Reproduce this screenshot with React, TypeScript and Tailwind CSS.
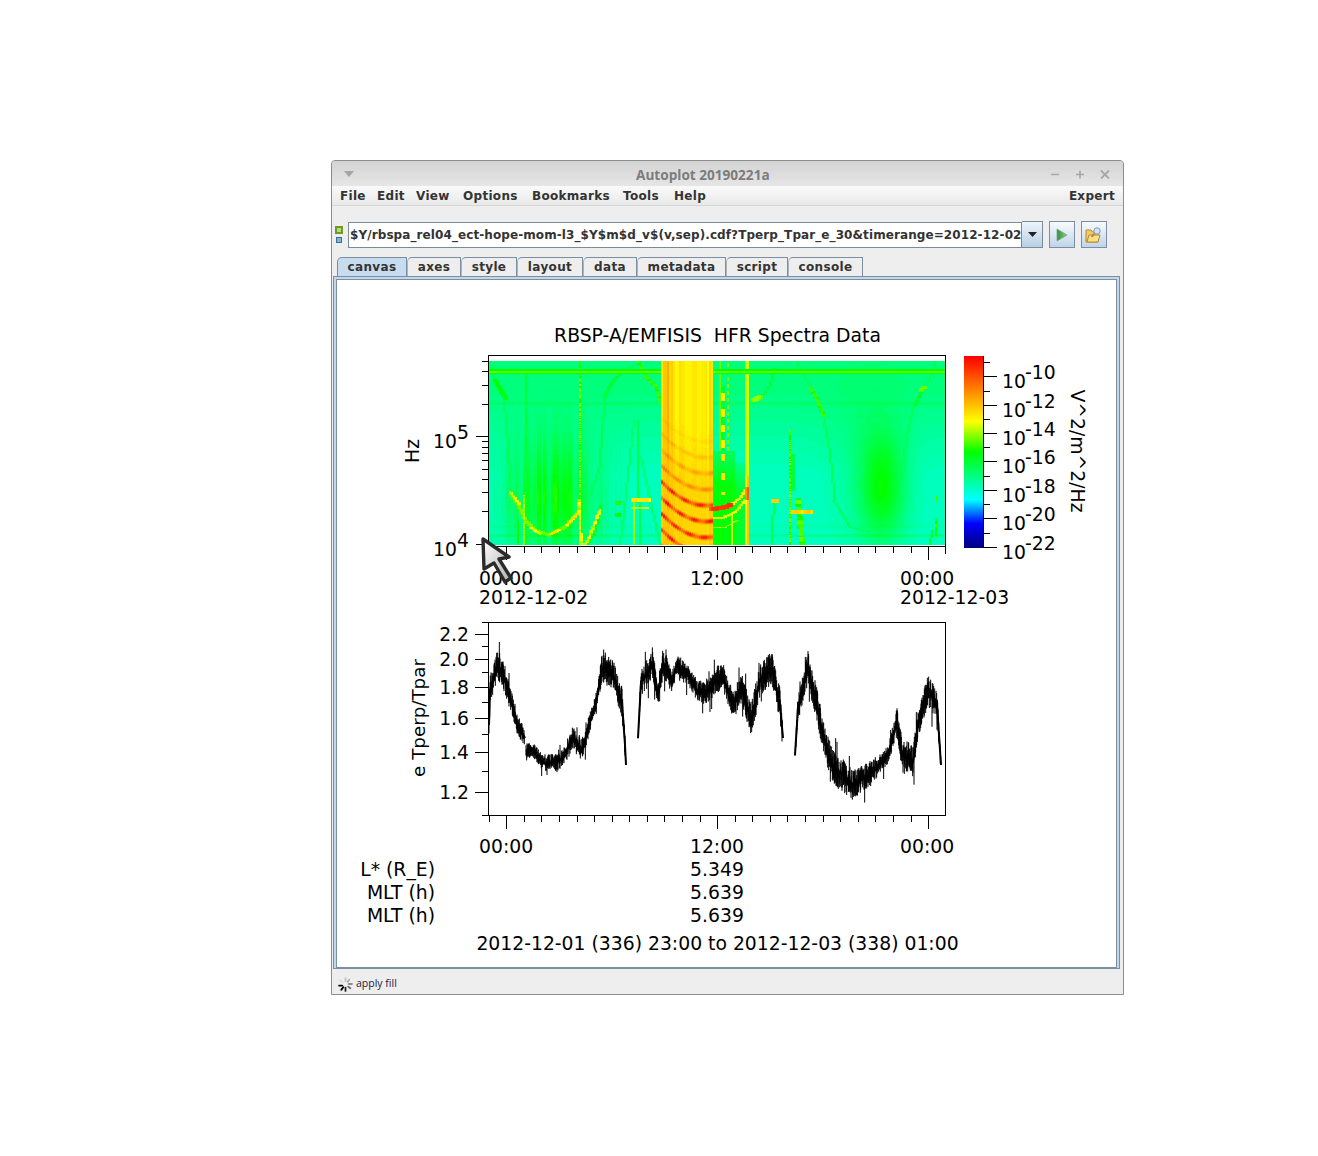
import React from "react";

const PW = 456;
const PH = 184;
const PX = 489;
const PY = 361;

function rng(seed: number) {
  let s = seed;
  return () => {
    s = (s * 1664525 + 1013904223) % 4294967296;
    return s / 4294967296;
  };
}

// rainbow colour table, same stops as the colour bar
function colormap(t: number) {
  const stops: [number, number, number, number][] = [
    [0, 0, 0, 128],
    [0.125, 0, 0, 255],
    [0.25, 0, 255, 255],
    [0.5, 0, 255, 0],
    [0.66, 255, 255, 0],
    [0.83, 255, 128, 0],
    [1, 255, 0, 0],
  ];
  const v = Math.max(0, Math.min(1, t));
  for (let i = 1; i < stops.length; i++) {
    if (v <= stops[i][0]) {
      const a = stops[i - 1];
      const b = stops[i];
      const f = (v - a[0]) / (b[0] - a[0]);
      return `rgb(${Math.round(a[1] + (b[1] - a[1]) * f)},${Math.round(a[2] + (b[2] - a[2]) * f)},${Math.round(a[3] + (b[3] - a[3]) * f)})`;
    }
  }
  return "rgb(255,0,0)";
}

function buildSpectrogram() {
  const r = rng(42);
  const cw = 2;
  const cols = Math.ceil(PW / cw);
  const field = new Float32Array(cols * PH);
  const colNoise = Array.from({ length: cols }, () => r());
  const get = (c: number, y: number) => field[c * PH + y];
  const put = (c: number, y: number, v: number) => {
    if (c >= 0 && c < cols && y >= 0 && y < PH) field[c * PH + y] = v;
  };
  const raise = (x: number, y: number, v: number) => {
    const c = Math.floor((x - PX) / cw);
    const yy = Math.floor(y - PY);
    if (c >= 0 && c < cols && yy >= 0 && yy < PH && get(c, yy) < v) put(c, yy, v);
  };

  const gauss = (x: number, y: number, cx: number, cy: number, sx: number, sy: number) =>
    Math.exp(-((x - cx) * (x - cx)) / (2 * sx * sx) - ((y - cy) * (y - cy)) / (2 * sy * sy));

  // background with the two broad green troughs
  for (let c = 0; c < cols; c++) {
    const x = PX + c * cw;
    for (let yy = 0; yy < PH; yy++) {
      const y = PY + yy;
      const s = Math.max(0, Math.min(1, (475 - y) / 85));
      let v = 0.312 + 0.065 * s;
      v += 0.165 * gauss(x, y, 552, 498, 32, 42) * (0.6 + 0.8 * colNoise[c]);
      v += 0.16 * gauss(x, y, 881, 487, 16, 36);
      v += 0.035 * gauss(x, y, 868, 470, 28, 60);
      if (y > 524 && y < 528) v += 0.014;
      if (y > 533 && y < 537) v += 0.04;
      if (y > 401 && y < 405) v += 0.028;
      if (y > 415 && y < 417) v += 0.012;
      put(c, yy, v);
    }
  }

  const stroke = (pts: number[][], hw: number, val: number, jitter = 0.03) => {
    const h = hw / 2;
    for (let i = 1; i < pts.length; i++) {
      const [x0, y0] = pts[i - 1];
      const [x1, y1] = pts[i];
      const n = Math.ceil(Math.hypot(x1 - x0, y1 - y0));
      for (let k = 0; k <= n; k++) {
        const x = x0 + ((x1 - x0) * k) / n;
        const y = y0 + ((y1 - y0) * k) / n;
        const vv = val + (r() - 0.5) * jitter;
        for (let dx = -h; dx <= h; dx++) for (let dy = -h; dy <= h; dy++) raise(x + dx, y + dy, vv);
      }
    }
  };

  // plasmapause style curves
  stroke([[490, 361], [495, 385], [504, 398], [508, 450], [511, 490]], 0, 0.42);
  stroke([[495, 380], [505, 398]], 2, 0.48);
  stroke([[510, 493], [518, 505], [525, 520], [535, 530], [548, 535], [565, 527], [578, 512]], 2, 0.55, 0.06);
  stroke([[530, 527], [540, 534]], 1, 0.62, 0.1);
  stroke([[550, 534], [560, 530]], 1, 0.66, 0.12);
  stroke([[567, 525], [578, 513]], 1, 0.66, 0.14);
  stroke([[510, 492], [520, 505]], 1, 0.62, 0.16);
  stroke([[526, 370], [526, 545]], 0, 0.44);
  stroke([[578, 512], [590, 495], [600, 465], [604, 400], [612, 382], [622, 372], [640, 361]], 0, 0.42);
  stroke([[604, 397], [612, 382], [622, 372]], 1, 0.45);
  stroke([[638, 361], [645, 377], [655, 385], [660, 402]], 1, 0.5, 0.1);
  stroke([[580, 361], [580, 545]], 0, 0.54, 0.14);
  stroke([[579, 500], [581, 545]], 1, 0.62, 0.14);
  stroke([[585, 545], [590, 535], [600, 510]], 1, 0.62, 0.1);
  stroke([[588, 545], [596, 530], [601, 505]], 0, 0.5);
  stroke([[523, 495], [523, 545]], 0, 0.6, 0.1);
  stroke([[518, 520], [519, 545]], 0, 0.5);
  stroke([[634, 420], [620, 545]], 0, 0.4);
  stroke([[637, 420], [640, 545]], 0, 0.43);
  stroke([[640, 455], [660, 545]], 0, 0.4);
  stroke([[633, 500], [648, 500]], 3, 0.68, 0.04);
  stroke([[633, 508], [648, 508]], 1, 0.62);
  stroke([[618, 503], [619, 503]], 3, 0.52);
  stroke([[618, 515], [619, 515]], 3, 0.5);
  stroke([[634, 500], [634, 545]], 0, 0.6);
  stroke([[752, 402], [756, 398], [764, 394], [770, 384], [775, 368]], 0, 0.45);
  stroke([[753, 400], [760, 397]], 3, 0.58, 0.06);
  stroke([[797, 362], [810, 387], [823, 417], [830, 453], [835, 503], [850, 527], [867, 532], [890, 522], [900, 487], [907, 433], [913, 407], [923, 388], [932, 375], [935, 361]], 0, 0.42);
  stroke([[810, 387], [818, 402], [824, 417]], 1, 0.52, 0.06);
  stroke([[915, 405], [923, 388]], 1, 0.46);
  stroke([[921, 390], [924, 387]], 2, 0.56);
  stroke([[855, 361], [863, 447]], 0, 0.385);
  stroke([[773, 501], [777, 501]], 3, 0.72);
  stroke([[794, 512], [811, 512]], 3, 0.7, 0.06);
  stroke([[790, 430], [790, 545]], 0, 0.54, 0.12);
  stroke([[793, 455], [793, 490]], 1, 0.43);
  stroke([[798, 500], [802, 545]], 3, 0.5, 0.14);
  stroke([[774, 500], [771, 545]], 0, 0.42);
  stroke([[936, 497], [936, 500]], 1, 0.55);
  stroke([[936, 520], [936, 537]], 1, 0.5, 0.12);
  stroke([[932, 530], [930, 545]], 0, 0.46);

  // the bright burst with its ripples
  for (let c = 0; c < cols; c++) {
    const x = PX + c * cw;
    if (x < 661 || x >= 749) continue;
    const stripe = colNoise[c];
    for (let yy = 0; yy < PH; yy++) {
      const y = PY + yy;
      const u = y + 0.012 * (x - 705) * (x - 705);
      const amp = Math.max(0, Math.min(1, (u - 430) / 60));
      const ripple = Math.sin((2 * Math.PI * (u - 505)) / 16 + Math.PI / 2);
      const peak = Math.pow(Math.max(0, ripple), 2);
      const lumps = 0.75 + 0.25 * Math.sin(x / 2.6 + y / 7);
      if (x < 712) {
        const lean = Math.max(0, Math.abs(x - 690) - 8) / 20;
        const fade = 1 - 0.6 * amp;
        const top = 0.665 + (0.03 + 0.1 * lean) * stripe * fade;
        const strong = u > 494 ? 0.26 : 0.11;
        put(c, yy, top + amp * (0.045 + strong * peak * lumps));
      } else if (x < 735) {
        const band = x > 717 && x < 720;
        const dots = x > 719 && x < 724;
        const thin = x > 726 && x < 729;
        if (y > 450) {
          let vv = 0.385 + 0.095 * Math.min(1, (y - 450) / 35) + stripe * 0.03;
          if (stripe > 0.72 && y > 512) vv = 0.63;
          if (dots && y < 495 && Math.sin(y / 3) > 0.3) vv = 0.7;
          put(c, yy, vv);
        } else if (band) {
          put(c, yy, 0.57);
        } else if (dots && y > 385) {
          put(c, yy, Math.sin(y / 2.5) > 0 ? 0.68 : 0.44);
        } else if (thin) {
          put(c, yy, Math.sin(y * 0.9) > -0.2 ? 0.58 : 0.4);
        }
      } else {
        if (y > 462 && x < 745) {
          put(c, yy, 0.345 + 0.1 * Math.min(1, (y - 462) / 30) + stripe * 0.02);
        }
        if (x >= 745 && x < 749) {
          const low = y > 475 ? (stripe > 0.5 ? 0.74 : 0.67) : 0.63;
          put(c, yy, low + (y > 486 && y < 500 ? 0.14 : 0));
        }
      }
    }
  }
  // the arcs that carry on to the right of the burst
  stroke([[712, 509], [722, 508], [731, 505]], 3, 0.9, 0.08);
  stroke([[731, 505], [740, 498], [746, 488]], 1, 0.66, 0.1);
  stroke([[712, 518], [722, 518], [735, 512], [745, 500]], 1, 0.62, 0.1);
  stroke([[712, 528], [725, 527], [738, 520]], 0, 0.58, 0.1);

  // strong emission line near the top
  for (let c = 0; c < cols; c++) {
    const x = PX + c * cw;
    const burst = x >= 661 && x < 712;
    for (let y = 369; y < 374; y++) {
      if (!burst) put(c, y - PY, y === 371 || y === 372 ? 0.56 : 0.51);
    }
  }

  const levels = 96;
  const paths: string[] = Array.from({ length: levels }, () => "");
  const q = (v: number) => Math.max(0, Math.min(levels - 1, Math.round(v * (levels - 1))));
  for (let c = 0; c < cols; c++) {
    const x = PX + c * cw;
    let start = 0;
    let cur = q(get(c, 0));
    for (let yy = 1; yy <= PH; yy++) {
      const lv = yy < PH ? q(get(c, yy)) : -1;
      if (lv !== cur) {
        paths[cur] += `M${x} ${PY + start}h${cw}v${yy - start}h-${cw}z`;
        start = yy;
        cur = lv;
      }
    }
  }
  return paths
    .map((d, i) => ({ d, fill: colormap(i / (levels - 1)) }))
    .filter((p) => p.d.length > 0);
}

// envelope of the Tperp/Tpar trace: x, y, half-width; segments are split at the data gaps
const traceSegments: number[][][] = [
  [[489, 725, 16], [490, 690, 20], [497, 665, 18], [503, 672, 18], [510, 698, 14], [518, 725, 13], [525, 738, 10]],
  [[526, 751, 9], [533, 750, 9], [543, 763, 9], [557, 762, 11], [563, 758, 11], [573, 738, 14], [582, 750, 14], [590, 722, 12], [597, 698, 10], [602, 668, 17], [613, 675, 19], [622, 702, 19], [625, 745, 14], [626, 765, 6]],
  [[638, 738, 2], [641, 682, 16], [653, 665, 18], [658, 695, 15], [663, 662, 17], [672, 682, 13], [677, 665, 11], [690, 678, 13], [698, 692, 13], [705, 693, 15], [722, 675, 17], [733, 705, 17], [742, 688, 18], [751, 722, 20], [760, 680, 20], [772, 668, 20], [780, 705, 20], [783, 738, 11]],
  [[795, 755, 4], [798, 708, 16], [808, 668, 20], [817, 705, 20], [823, 735, 20], [832, 765, 21], [853, 785, 18], [873, 772, 15], [888, 755, 10], [897, 722, 17], [902, 755, 21], [913, 762, 19], [918, 725, 16], [928, 690, 18], [937, 705, 18], [941, 765, 9]],
];

function buildTrace() {
  const r = rng(7);
  let d = "";
  let mid = "";
  for (const seg of traceSegments) {
    mid += `M${seg[0][0]} ${seg[0][1]}`;
    for (let i = 1; i < seg.length; i++) {
      const [x0, y0, a0] = seg[i - 1];
      const [x1, y1, a1] = seg[i];
      mid += `L${x1} ${y1}`;
      const n = Math.max(1, Math.round((x1 - x0) * 3));
      for (let k = 0; k < n; k++) {
        const f = k / n;
        const x = x0 + (x1 - x0) * f;
        const y = y0 + (y1 - y0) * f;
        const a = a0 + (a1 - a0) * f;
        const up = a * r() * (r() < 0.05 ? 1.5 : 0.85);
        const dn = a * r() * (r() < 0.06 ? 1.7 : 0.85);
        d += `M${x.toFixed(2)} ${(y - up).toFixed(1)}V${(y + dn).toFixed(1)}`;
      }
    }
  }
  return { d, mid };
}

const spectro = buildSpectrogram();
const trace = buildTrace();

const hourTicks = Array.from({ length: 26 }, (_, i) => 489.1 + i * 17.58);
const decadeLogs = [1, 2, 3, 4, 5, 6, 7, 8, 9];
const freqTicks = [
  ...decadeLogs.map((m) => 544.2 - Math.log10(m) * 107.5),
  ...[1, 2, 3, 4, 5].map((m) => 436.7 - Math.log10(m) * 107.5),
];
const ratioMajor = [
  { y: 634, t: "2.2" },
  { y: 659, t: "2.0" },
  { y: 687, t: "1.8" },
  { y: 718, t: "1.6" },
  { y: 752, t: "1.4" },
  { y: 792, t: "1.2" },
];
const ratioMinor = [622, 646, 672, 702, 734, 771, 815];
const barMajor = [
  { y: 376.7, e: "-10" },
  { y: 405, e: "-12" },
  { y: 433, e: "-14" },
  { y: 461.5, e: "-16" },
  { y: 490, e: "-18" },
  { y: 518.5, e: "-20" },
  { y: 547, e: "-22" },
];
const barMinor = [362.5, 391, 419, 447, 476, 504, 533];
const barRows = Array.from({ length: 192 }, (_, i) => i);

function PowerLabel({ x, y, exp, ex }: { x: number; y: number; exp: string; ex: number }) {
  return (
    <>
      <text x={x} y={y}>10</text>
      <text x={ex} y={y - 9}>{exp}</text>
    </>
  );
}

function Canvas() {
  return (
    <svg width={779} height={687} viewBox="337 280 779 687" className="block font-['DejaVu_Sans',sans-serif] text-[18.8px]" fill="#000">
      <text x={717.5} y={342} textAnchor="middle" className="whitespace-pre">RBSP-A/EMFISIS  HFR Spectra Data</text>

      {/* spectrogram */}
      <g shapeRendering="crispEdges">
        {spectro.map((p) => (
          <path key={p.fill} d={p.d} fill={p.fill} />
        ))}
      </g>
      <g stroke="#000" strokeWidth={1} shapeRendering="crispEdges" fill="none">
        <rect x={488.5} y={355.5} width={457} height={191} />
        {hourTicks.map((x) => (
          <line key={x} x1={x} x2={x} y1={547} y2={553} />
        ))}
        {[506.7, 717.6, 928.5].map((x) => (
          <line key={x} x1={x} x2={x} y1={547} y2={560} />
        ))}
        <line x1={945.5} x2={945.5} y1={547} y2={554} />
        {freqTicks.map((y, i) => (
          <line key={i} x1={482} x2={489} y1={y} y2={y} />
        ))}
        <line x1={476} x2={489} y1={544} y2={544} />
        <line x1={476} x2={489} y1={436.5} y2={436.5} />
      </g>
      <text x={433} y={556}>10</text>
      <text x={457} y={547}>4</text>
      <text x={433} y={448}>10</text>
      <text x={457} y={439}>5</text>
      <text transform="translate(419 451) rotate(-90)" textAnchor="middle">Hz</text>
      <text x={479} y={585}>00:00</text>
      <text x={717} y={585} textAnchor="middle">12:00</text>
      <text x={900} y={585}>00:00</text>
      <text x={479} y={604}>2012-12-02</text>
      <text x={900} y={604}>2012-12-03</text>

      {/* colour bar */}
      <g shapeRendering="crispEdges">
        {barRows.map((i) => (
          <rect key={i} x={964} y={356 + i} width={20} height={1} fill={colormap(1 - i / 191)} />
        ))}
      </g>
      <g stroke="#000" strokeWidth={1} shapeRendering="crispEdges">
        <line x1={983.5} x2={983.5} y1={356} y2={548} />
        {barMajor.map((b) => (
          <line key={b.y} x1={984} x2={997} y1={b.y} y2={b.y} />
        ))}
        {barMinor.map((y) => (
          <line key={y} x1={984} x2={990} y1={y} y2={y} />
        ))}
      </g>
      {barMajor.map((b) => (
        <PowerLabel key={b.e} x={1002} y={b.y + 11.5} ex={1025} exp={b.e} />
      ))}
      <text transform="translate(1071 451) rotate(90)" textAnchor="middle">V^2/m^2/Hz</text>

      {/* line plot */}
      <path d={trace.mid} stroke="#000" strokeWidth={2} fill="none" />
      <path d={trace.d} stroke="#000" strokeWidth={1} fill="none" />
      <g stroke="#000" strokeWidth={1} shapeRendering="crispEdges" fill="none">
        <rect x={488.5} y={622.5} width={457} height={193} />
        {hourTicks.map((x) => (
          <line key={x} x1={x} x2={x} y1={816} y2={822} />
        ))}
        {[506.7, 717.6, 928.5].map((x) => (
          <line key={x} x1={x} x2={x} y1={816} y2={829} />
        ))}
        {ratioMajor.map((m) => (
          <line key={m.y} x1={475} x2={489} y1={m.y} y2={m.y} />
        ))}
        {ratioMinor.map((y) => (
          <line key={y} x1={482} x2={489} y1={y} y2={y} />
        ))}
      </g>
      {ratioMajor.map((m) => (
        <text key={m.t} x={469} y={m.y + 6.5} textAnchor="end">{m.t}</text>
      ))}
      <text transform="translate(425 718) rotate(-90)" textAnchor="middle" className="text-[18.3px]">e Tperp/Tpar</text>
      <text x={479} y={853}>00:00</text>
      <text x={717} y={853} textAnchor="middle">12:00</text>
      <text x={900} y={853}>00:00</text>
      <text x={435} y={876} textAnchor="end">L* (R_E)</text>
      <text x={435} y={899} textAnchor="end">MLT (h)</text>
      <text x={435} y={922} textAnchor="end">MLT (h)</text>
      <text x={717} y={876} textAnchor="middle">5.349</text>
      <text x={717} y={899} textAnchor="middle">5.639</text>
      <text x={717} y={922} textAnchor="middle">5.639</text>
      <text x={717.5} y={950} textAnchor="middle">2012-12-01 (336) 23:00 to 2012-12-03 (338) 01:00</text>

      {/* pointer */}
      <defs>
        <linearGradient id="ptr" x1="0" y1="0" x2="1" y2="1">
          <stop offset="0" stopColor="#ffffff" />
          <stop offset="1" stopColor="#b0b0b0" />
        </linearGradient>
      </defs>
      <path d="M483 539 L509 557 L499 559 L511 578 L505 582 L494 563 L484 569 Z" fill="url(#ptr)" stroke="#2b2b2b" strokeWidth={3.4} strokeLinejoin="round" />
    </svg>
  );
}

const tabs = [
  { name: "canvas", w: "w-[70px]", active: true },
  { name: "axes", w: "w-[54px]" },
  { name: "style", w: "w-[56px]" },
  { name: "layout", w: "w-[66px]" },
  { name: "data", w: "w-[54px]" },
  { name: "metadata", w: "w-[89px]" },
  { name: "script", w: "w-[62px]" },
  { name: "console", w: "w-[75px]" },
];

const menus = [
  { name: "File", w: "w-[37px]" },
  { name: "Edit", w: "w-[39px]" },
  { name: "View", w: "w-[47px]" },
  { name: "Options", w: "w-[69px]" },
  { name: "Bookmarks", w: "w-[91px]" },
  { name: "Tools", w: "w-[51px]" },
  { name: "Help", w: "w-[40px]" },
];

export default function App() {
  return (
    <div className="min-h-[1156px] bg-white pl-[331px] pt-[160px] font-['DejaVu_Sans',sans-serif]">
      <div className="flex h-[835px] w-[793px] flex-col overflow-hidden rounded-t-[4px] border border-[#8c8c8c] bg-[#eeeeee]">
        {/* title bar */}
        <div className="relative flex h-[25px] shrink-0 items-center bg-gradient-to-b from-[#d3d3d3] to-[#e6e6e6]">
          <svg width="10" height="6" className="ml-[12px]" viewBox="0 0 10 6">
            <path d="M0 0H10L5 6Z" fill="#a5a5a5" />
          </svg>
          <span className="absolute left-[304px] top-[4px] font-['Open_Sans',sans-serif] text-[13.6px] leading-[19px] font-bold text-[#7c7c7c]">Autoplot 20190221a</span>
          <div className="ml-auto mr-[13px] flex items-center gap-[15px]">
            <svg width="10" height="10" viewBox="0 0 10 10"><path d="M1 5.5H9" stroke="#a8a8a8" strokeWidth="1.6" /></svg>
            <svg width="10" height="10" viewBox="0 0 10 10"><path d="M1 5.5H9M5 1.5V9.5" stroke="#a8a8a8" strokeWidth="1.6" /></svg>
            <svg width="10" height="10" viewBox="0 0 10 10"><path d="M1 1.5L9 9.5M9 1.5L1 9.5" stroke="#a8a8a8" strokeWidth="1.8" /></svg>
          </div>
        </div>

        {/* menu bar */}
        <div className="flex h-[20px] shrink-0 items-center border-b border-[#d6d6d6] bg-gradient-to-b from-[#fafafa] to-[#e9e9e9] pl-[8px] pr-[8px] text-[12px] leading-none font-bold tracking-[0.3px] text-[#333333]">
          {menus.map((m) => (
            <span key={m.name} className={m.w}>{m.name}</span>
          ))}
          <span className="ml-auto">Expert</span>
        </div>

        {/* address row */}
        <div className="mt-[15px] flex h-[27px] shrink-0 items-center pl-[3px]">
          <div className="mr-[5px] flex w-[8px] flex-col items-center gap-[3px]">
            <div className="h-[8px] w-[8px] border-2 border-[#6f9a28] bg-[#b6dc7c]" />
            <div className="h-[6px] w-[6px] border border-[#3d6d8f] bg-[#7fb4dc]" />
          </div>
          <div className="flex h-[26px] w-[674px] items-center overflow-hidden border border-[#7a8a99] bg-white pl-[1px] text-[12px] font-bold tracking-[0.09px] whitespace-nowrap text-[#333333]">
            $Y/rbspa_rel04_ect-hope-mom-l3_$Y$m$d_v$(v,sep).cdf?Tperp_Tpar_e_30&amp;timerange=2012-12-02
          </div>
          <button className="flex h-[27px] w-[21px] items-center justify-center border border-[#7a8a99] border-l-0 bg-gradient-to-b from-[#eef4fa] to-[#b8cfe5]">
            <svg width="9" height="5" viewBox="0 0 9 5"><path d="M0 0H9L4.5 5Z" fill="#222222" /></svg>
          </button>
          <button className="ml-[6px] flex h-[27px] w-[26px] items-center justify-center border border-[#7a8fa3] bg-gradient-to-b from-[#f8fbfe] to-[#c0d4e8]">
            <svg width="12" height="14" viewBox="0 0 12 14">
              <defs>
                <linearGradient id="play" x1="0" y1="0" x2="1" y2="0">
                  <stop offset="0" stopColor="#2f8f45" />
                  <stop offset="1" stopColor="#7fd06f" />
                </linearGradient>
              </defs>
              <path d="M1 1L11 7L1 13Z" fill="url(#play)" stroke="#7fa58a" strokeWidth="0.8" />
            </svg>
          </button>
          <button className="ml-[6px] flex h-[27px] w-[26px] items-center justify-center border border-[#7a8fa3] bg-gradient-to-b from-[#f8fbfe] to-[#c0d4e8]">
            <svg width="18" height="18" viewBox="0 0 18 18">
              <path d="M1 4H6L7.5 6H13V16H1Z" fill="#f2cc62" stroke="#b58a2c" strokeWidth="1" />
              <path d="M2 16L4 9H15L13 16Z" fill="#fbe08a" stroke="#b58a2c" strokeWidth="1" />
              <circle cx="12" cy="5" r="3.2" fill="#cfe3f5" stroke="#7f9cb8" strokeWidth="1" />
              <path d="M9.5 7.5L6.5 11" stroke="#c9772e" strokeWidth="1.6" />
            </svg>
          </button>
        </div>

        {/* tabs */}
        <div className="mt-[9px] flex h-[19px] shrink-0 pl-[5px]">
          {tabs.map((t) => (
            <div
              key={t.name}
              className={`${t.w} ${t.active ? "bg-[#c8dcf0]" : "bg-[#eeeeee]"} flex h-[19px] items-center justify-center rounded-tl-[5px] border border-b-0 border-[#7a8fa3] text-[12px] font-bold tracking-[0.35px] text-[#333333] not-first:border-l-[#a9b5c0]`}
            >
              {t.name}
            </div>
          ))}
        </div>

        {/* canvas panel */}
        <div className="ml-[1px] h-[693px] w-[787px] shrink-0 border border-[#7a8fa3] bg-[#c3d6ea] p-[2px]">
          <div className="h-[689px] w-[781px] border border-[#7a8fa3] bg-white">
            <Canvas />
          </div>
        </div>

        {/* status bar */}
        <div className="flex h-[24px] flex-1 items-center gap-[3px] pl-[6px] pt-[5px] font-['Open_Sans',sans-serif] text-[10.5px] text-[#22223a]">
          <svg width="15" height="15" viewBox="0 0 14 14">
            <g strokeWidth="1.7" strokeLinecap="round">
              <path d="M7 1V4" stroke="#c4c4c4" />
              <path d="M10.5 2.5L9 4.5" stroke="#aaaaaa" />
              <path d="M13 6.5H10" stroke="#8c8c8c" />
              <path d="M11.5 10.5L9.5 9" stroke="#666666" />
              <path d="M7 13V10" stroke="#222222" />
              <path d="M3 12L5 9.5" stroke="#000000" />
              <path d="M1 8H4" stroke="#000000" />
              <path d="M2 3L4.5 5" stroke="#dddddd" />
            </g>
          </svg>
          <span>apply fill</span>
        </div>
      </div>
    </div>
  );
}
